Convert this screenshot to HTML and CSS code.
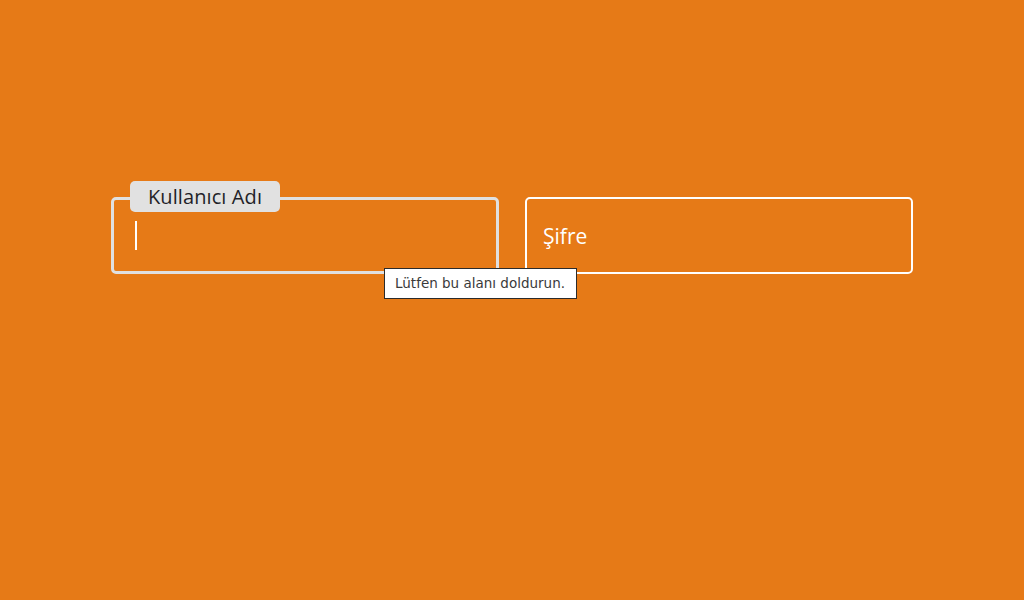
FILE: index.html
```html
<!DOCTYPE html>
<html lang="tr">
<head>
<meta charset="utf-8">
<title>Giriş</title>
<link rel="stylesheet" href="styles.css">
</head>
<body>
<form class="form">
  <div class="field field-focused">
    <span class="badge">Kullanıcı Adı</span>
    <span class="caret"></span>
    <div class="tooltip">Lütfen bu alanı doldurun.</div>
  </div>
  <div class="field">
    <span class="placeholder">Şifre</span>
  </div>
</form>
</body>
</html>
```
FILE: styles.css
```css
html, body {
  margin: 0;
  padding: 0;
}
body {
  background: #e67a17;
  width: 1024px;
  height: 600px;
  overflow: hidden;
  font-family: "Open Sans", "Noto Sans", sans-serif;
}
.form {
  display: flex;
  justify-content: center;
  gap: 26px;
  padding-top: 197px;
  margin: 0;
}
.field {
  position: relative;
  box-sizing: border-box;
  width: 388px;
  height: 77px;
  border: 2px solid #ffffff;
  border-radius: 5px;
  display: flex;
  align-items: center;
  padding-left: 16px;
}
.field-focused {
  border: 3px solid #e0e0e0;
  padding-left: 21px;
}
.badge {
  position: absolute;
  left: 16px;
  top: -19px;
  height: 31px;
  width: 150px;
  box-sizing: border-box;
  background: #e1e1e1;
  border-radius: 5px;
  color: #1f1f28;
  font-size: 20px;
  line-height: 31px;
  text-align: center;
  letter-spacing: 0.1px;
}
.caret {
  display: block;
  width: 2px;
  height: 29px;
  background: #ffffff;
}
.placeholder {
  color: #ffffff;
  font-size: 21px;
  font-weight: 500;
  line-height: 1;
  margin-top: 1px;
}
.tooltip {
  position: absolute;
  left: 270px;
  top: 68px;
  width: 193px;
  height: 31px;
  box-sizing: border-box;
  background: #ffffff;
  border: 1px solid #2b2b2b;
  color: #3a3a3a;
  font-family: "DejaVu Sans", sans-serif;
  font-size: 13.5px;
  line-height: 29px;
  padding-left: 10px;
  white-space: nowrap;
  z-index: 2;
}
```
